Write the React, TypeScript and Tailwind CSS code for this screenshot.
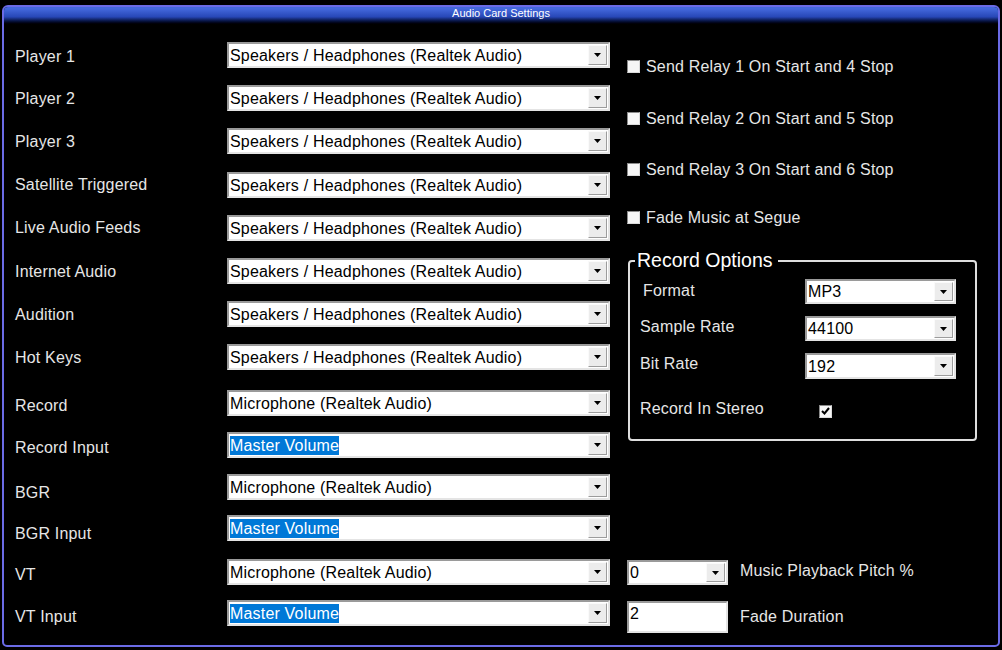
const SPK = "Speakers / Headphones (Realtek Audio)";
const MIC = "Microphone (Realtek Audio)";
const MV = "Master Volume";

type Row = {
  label: string;
  value: string;
  selected?: boolean;
  gap: string;
  labelCls: string;
};

const rows: Row[] = [
  { label: "Player 1", value: SPK, gap: "mt-0", labelCls: "pt-[3px]" },
  { label: "Player 2", value: SPK, gap: "mt-[17px]", labelCls: "pt-[2px]" },
  { label: "Player 3", value: SPK, gap: "mt-[17px]", labelCls: "pt-[2px]" },
  { label: "Satellite Triggered", value: SPK, gap: "mt-[18px]", labelCls: "" },
  { label: "Live Audio Feeds", value: SPK, gap: "mt-[17px]", labelCls: "" },
  { label: "Internet Audio", value: SPK, gap: "mt-[17px]", labelCls: "pt-[2px]" },
  { label: "Audition", value: SPK, gap: "mt-[17px]", labelCls: "pt-[2px]" },
  { label: "Hot Keys", value: SPK, gap: "mt-[17px]", labelCls: "pt-[2px]" },
  { label: "Record", value: MIC, gap: "mt-[20px]", labelCls: "pt-[6px]" },
  { label: "Record Input", value: MV, selected: true, gap: "mt-[16px]", labelCls: "pt-[6px]" },
  { label: "BGR", value: MIC, gap: "mt-[16px]", labelCls: "pt-[12px]" },
  { label: "BGR Input", value: MV, selected: true, gap: "mt-[15px]", labelCls: "pt-[12px]" },
  { label: "VT", value: MIC, gap: "mt-[18px]", labelCls: "pt-[6px]" },
  { label: "VT Input", value: MV, selected: true, gap: "mt-[15px]", labelCls: "pt-[8px]" },
];

const Arrow = () => (
  <div className="my-[1px] mr-[1px] w-[19px] flex items-center justify-center bg-[#ececec] border border-t-[#fafafa] border-l-[#fafafa] border-r-[#9c9c9c] border-b-[#9c9c9c]">
    <svg width="7" height="4" viewBox="0 0 7 4">
      <path d="M0 0H7L3.5 4Z" fill="#000" />
    </svg>
  </div>
);

type SelectProps = {
  value: string;
  selected?: boolean;
  className: string;
};

const Select = ({ value, selected, className }: SelectProps) => (
  <div
    className={`flex bg-white border-2 border-t-[#9a9a9a] border-l-[#9a9a9a] border-r-[#e4e4e4] border-b-[#e4e4e4] ${className}`}
  >
    <div className="flex-1 flex items-center pl-[1px] overflow-hidden whitespace-nowrap">
      <span
        className={`leading-[19px] ${selected ? "bg-[#0078d7] text-white" : "text-black"}`}
      >
        {value}
      </span>
    </div>
    <Arrow />
  </div>
);

const Check = ({ checked }: { checked?: boolean }) => (
  <div className="w-[13px] h-[13px] shrink-0 bg-[#f6f6f6] border border-t-[#8a8a8a] border-l-[#8a8a8a] border-r-[#dadada] border-b-[#dadada] flex items-center justify-center">
    {checked && (
      <svg width="9" height="8" viewBox="0 0 9 8">
        <path d="M1 4L3.5 6.5L8 1" stroke="#000" strokeWidth="2" fill="none" />
      </svg>
    )}
  </div>
);

const relays = [
  { text: "Send Relay 1 On Start and 4 Stop", gap: "mt-[31px]" },
  { text: "Send Relay 2 On Start and 5 Stop", gap: "mt-[32px]" },
  { text: "Send Relay 3 On Start and 6 Stop", gap: "mt-[31px]" },
  { text: "Fade Music at Segue", gap: "mt-[28px]" },
];

export default function App() {
  return (
    <div className="w-[1002px] h-[650px] bg-black pt-[5px] pl-[2px] overflow-hidden font-['Liberation_Sans',Arial,sans-serif] text-[16px] tracking-[0.18px]">
      <div className="w-[998px] h-[642px] border-2 border-[#6b6be6] rounded-t-[6px] rounded-b-[5px] flex flex-col overflow-hidden">
        <div className="h-[18px] shrink-0 flex items-center justify-center pb-[5px] bg-linear-to-b from-[#4468dc] from-10% via-[#2747b6] via-55% to-black text-white text-[11px] tracking-normal">
          Audio Card Settings
        </div>

        <div className="flex pl-[11px]">
          <div className="flex flex-col pt-[17px] w-[595px]">
            {rows.map((r) => (
              <div key={r.label} className={`flex h-[26px] ${r.gap}`}>
                <div
                  className={`w-[212px] h-[26px] flex items-center text-[#e6e6e6] ${r.labelCls}`}
                >
                  {r.label}
                </div>
                <Select value={r.value} selected={r.selected} className="w-[383px] h-[26px]" />
              </div>
            ))}
          </div>

          <div className="ml-[17px] w-[352px] flex flex-col text-[#e6e6e6]">
            {relays.map((r) => (
              <div key={r.text} className={`flex items-center h-[20px] ${r.gap}`}>
                <Check />
                <span className="ml-[6px] pt-[2px]">{r.text}</span>
              </div>
            ))}

            <div className="relative mt-[33px] ml-[1px] w-[349px] h-[181px] border-2 border-[#dedede] rounded-[4px] pl-[10px] pt-[17px]">
              <div className="absolute left-[5px] top-[-13px] pl-[2px] pr-[6px] bg-black text-white text-[19.5px] leading-[22px] tracking-normal">
                Record Options
              </div>
              <div className="flex items-center h-[25px]">
                <span className="w-[165px] pl-[3px] -translate-y-[1px]">Format</span>
                <Select value="MP3" className="w-[151px] h-[25px]" />
              </div>
              <div className="flex items-center h-[25px] mt-[12px]">
                <span className="w-[165px] -translate-y-[2px]">Sample Rate</span>
                <Select value="44100" className="w-[151px] h-[25px]" />
              </div>
              <div className="flex items-center h-[26px] mt-[12px]">
                <span className="w-[165px] -translate-y-[2px]">Bit Rate</span>
                <Select value="192" className="w-[151px] h-[26px]" />
              </div>
              <div className="flex items-center h-[20px] mt-[19px]">
                <span className="w-[165px] translate-y-[1px]">Record In Stereo</span>
                <div className="ml-[14px] translate-y-[3px]">
                  <Check checked />
                </div>
              </div>
            </div>

            <div className="flex items-center mt-[119px] h-[25px]">
              <Select value="0" className="w-[101px] h-[25px]" />
              <span className="ml-[12px] -translate-y-[2px]">Music Playback Pitch %</span>
            </div>
            <div className="flex items-center mt-[16px] h-[32px]">
              <div className="w-[101px] h-[32px] bg-white border-2 border-t-[#9a9a9a] border-l-[#9a9a9a] border-r-[#e4e4e4] border-b-[#e4e4e4] pl-[1px] pt-[1px] text-black leading-[19px]">
                2
              </div>
              <span className="ml-[12px]">Fade Duration</span>
            </div>
          </div>
        </div>
      </div>
    </div>
  );
}
